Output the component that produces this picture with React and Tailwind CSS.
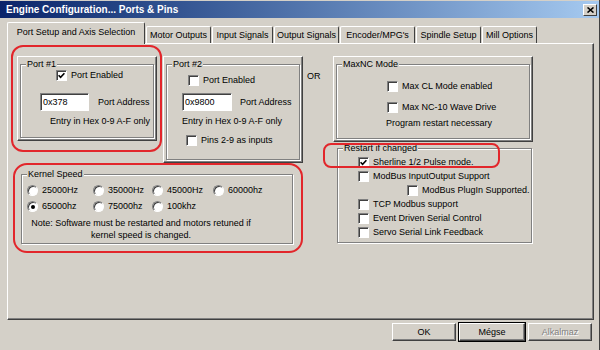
import React from "react";

const Check = ({ checked }) => (
  <span className="flex h-[11px] w-[11px] shrink-0 items-center justify-center border border-t-[#808080] border-l-[#808080] border-b-white border-r-white bg-white shadow-[inset_1px_1px_0_#404040]">
    {checked && (
      <svg width="7" height="7" viewBox="0 0 7 7">
        <path d="M0.6 3.2 L2.6 5.3 L6.4 1.2" stroke="#000" strokeWidth="1.6" fill="none" />
      </svg>
    )}
  </span>
);

const CheckRow = ({ checked, label, className = "" }) => (
  <div className={`flex h-[11px] items-center gap-[4px] ${className}`}>
    <Check checked={checked} />
    <span className="whitespace-nowrap">{label}</span>
  </div>
);

const Radio = ({ checked, label }) => (
  <div className="flex h-[11px] items-center gap-[4px]">
    <span className="flex h-[11px] w-[11px] shrink-0 items-center justify-center rounded-full border border-t-[#808080] border-l-[#808080] border-b-white border-r-white bg-white shadow-[inset_1px_1px_0_#404040]">
      {checked && <span className="h-[4px] w-[4px] rounded-full bg-black" />}
    </span>
    <span className="whitespace-nowrap">{label}</span>
  </div>
);

const Group = ({ title, className = "", children }) => (
  <fieldset className={`border border-[#808080] shadow-[inset_1px_1px_0_#fff,1px_1px_0_#fff] ${className}`}>
    <legend className="ml-[5px] bg-[#d4d0c8] px-[1px] leading-[11px]">{title}</legend>
    {children}
  </fieldset>
);

const Frame = ({ className = "", children }) => (
  <div className={`flex border border-t-white border-l-white border-r-[#404040] border-b-[#404040] p-[2px] shadow-[inset_-1px_-1px_0_#808080] ${className}`}>
    {children}
  </div>
);

const HexInput = ({ value, className = "" }) => (
  <div className={`flex h-[18px] items-center border border-t-[#808080] border-l-[#808080] border-b-white border-r-white bg-white pl-[2px] shadow-[inset_1px_1px_0_#404040] ${className}`}>
    {value}
  </div>
);

const tabs = [
  { name: "Motor Outputs", w: "w-[65px]" },
  { name: "Input Signals", w: "w-[61px]" },
  { name: "Output Signals", w: "w-[65px]" },
  { name: "Encoder/MPG's", w: "w-[75px]" },
  { name: "Spindle Setup", w: "w-[65px]" },
  { name: "Mill Options", w: "w-[55px]" },
];

const Button = ({ children, className = "" }) => (
  <div className={`flex h-[18px] items-center justify-center border border-t-white border-l-white border-r-[#404040] border-b-[#404040] shadow-[inset_-1px_-1px_0_#808080] ${className}`}>
    {children}
  </div>
);

const App = () => {
  return (
    <div className="relative flex h-[350px] w-[600px] flex-col overflow-hidden border-r border-r-[#404040] bg-[#d4d0c8] font-['Liberation_Sans',Arial,sans-serif] text-[9px] leading-[11px] text-black">
      {/* title bar */}
      <div className="mt-[1px] flex h-[17px] items-center justify-between bg-linear-to-r from-[#0a246a] to-[#a6caf0] pl-[6px] pr-[2px]">
        <span className="text-[10px] font-bold text-white">Engine Configuration... Ports &amp; Pins</span>
        <div className="flex h-[12px] w-[14px] items-center justify-center border border-t-white border-l-white border-r-[#404040] border-b-[#404040] bg-[#d4d0c8]">
          <svg width="7" height="6" viewBox="0 0 7 6">
            <path d="M0.5 0.5 L6.5 5.5 M6.5 0.5 L0.5 5.5" stroke="#000" strokeWidth="1.6" />
          </svg>
        </div>
      </div>

      <div className="flex flex-col px-[7px]">
        {/* tabs */}
        <div className="mt-[4px] flex items-end gap-[1px]">
          <div className="relative z-10 -mb-[1px] flex h-[22px] w-[138px] justify-center rounded-t-[2px] border border-b-0 border-t-white border-l-white border-r-[#404040] bg-[#d4d0c8] pt-[4px]">
            Port Setup and Axis Selection
          </div>
          {tabs.map((t) => (
            <div
              key={t.name}
              className={`flex h-[17px] ${t.w} justify-center whitespace-nowrap rounded-t-[2px] border border-b-0 border-t-white border-l-white border-r-[#404040] pt-[3px]`}
            >
              {t.name}
            </div>
          ))}
        </div>

        {/* panel */}
        <div className="flex h-[277px] w-[587px] border border-t-white border-l-white border-r-[#404040] border-b-[#404040] pl-[9px] pt-[12px] shadow-[inset_-1px_-1px_0_#808080]">
          <div className="flex w-[286px] flex-col">
            <div className="flex items-start gap-[6px]">
              <Frame className="h-[85px] w-[140px]">
                <Group title="Port #1" className="grow">
                  <div className="flex flex-col">
                    <CheckRow checked label="Port Enabled" className="pl-[35px]" />
                    <div className="mt-[12px] flex items-center gap-[9px] pl-[19px]">
                      <HexInput value="0x378" className="w-[49px]" />
                      <span>Port Address</span>
                    </div>
                    <div className="mt-[5px] pl-[29px]">Entry in Hex 0-9 A-F only</div>
                  </div>
                </Group>
              </Frame>
              <Frame className="h-[107px] w-[140px]">
                <Group title="Port #2" className="grow">
                  <div className="flex flex-col">
                    <CheckRow label="Port Enabled" className="mt-[5px] pl-[21px]" />
                    <div className="mt-[7px] flex items-center gap-[8px] pl-[15px]">
                      <HexInput value="0x9800" className="w-[50px]" />
                      <span>Port Address</span>
                    </div>
                    <div className="mt-[5px] pl-[15px]">Entry in Hex 0-9 A-F only</div>
                    <CheckRow label="Pins 2-9 as inputs" className="mt-[8px] pl-[19px]" />
                  </div>
                </Group>
              </Frame>
            </div>

            <Group title="Kernel Speed" className="ml-[4px] mt-[6px] h-[75px] w-[272px]">
              <div className="flex flex-col pl-[5px]">
                <div className="mt-[5px] grid grid-cols-[66px_59px_61px_auto]">
                  <Radio label="25000Hz" />
                  <Radio label="35000Hz" />
                  <Radio label="45000Hz" />
                  <Radio label="60000hz" />
                </div>
                <div className="mt-[5px] grid grid-cols-[66px_59px_61px_auto]">
                  <Radio checked label="65000hz" />
                  <Radio label="75000hz" />
                  <Radio label="100khz" />
                </div>
              </div>
              <div className="mt-[5px] w-[238px] text-center leading-[12px]">
                Note: Software must be restarted and motors retuned if
                <br />
                kernel speed is changed.
              </div>
            </Group>
          </div>

          <div className="w-[30px] pl-[4px] pt-[15px]">OR</div>

          <div className="flex flex-col">
            <Frame className="h-[86px] w-[200px]">
              <Group title="MaxNC Mode" className="grow">
                <div className="flex flex-col">
                  <CheckRow label="Max CL Mode enabled" className="mt-[11px] pl-[50px]" />
                  <CheckRow label="Max NC-10 Wave Drive" className="mt-[10px] pl-[50px]" />
                  <div className="mt-[5px] pl-[49px]">Program restart necessary</div>
                </div>
              </Group>
            </Frame>
            <Group title="Restart if changed" className="ml-[4px] mt-[1px] h-[100px] w-[195px]">
              <div className="mt-[3px] flex flex-col gap-[3px] pl-[20px]">
                <CheckRow checked label="Sherline 1/2 Pulse mode." />
                <CheckRow label="ModBus InputOutput Support" />
                <CheckRow label="ModBus PlugIn Supported." className="pl-[49px]" />
                <CheckRow label="TCP Modbus support" />
                <CheckRow label="Event Driven Serial Control" />
                <CheckRow label="Servo Serial Link Feedback" />
              </div>
            </Group>
          </div>
        </div>

        {/* buttons */}
        <div className="mt-[3px] flex justify-end gap-[3px]">
          <Button className="w-[64px]">OK</Button>
          <Button className="w-[66px] outline outline-1 outline-black">Mégse</Button>
          <Button className="w-[64px] text-[#808080] [text-shadow:1px_1px_0_#fff]">Alkalmaz</Button>
        </div>
      </div>

      {/* red annotation marks */}
      <div className="pointer-events-none absolute left-[11px] top-[45px] h-[107px] w-[151px] rounded-[12px] border-2 border-[#e2262b]" />
      <div className="pointer-events-none absolute left-[13px] top-[163px] h-[90px] w-[290px] rounded-[14px] border-2 border-[#e2262b]" />
      <div className="pointer-events-none absolute left-[323px] top-[143px] h-[25px] w-[177px] rounded-[8px] border-2 border-[#e2262b]" />
    </div>
  );
};

export default App;
